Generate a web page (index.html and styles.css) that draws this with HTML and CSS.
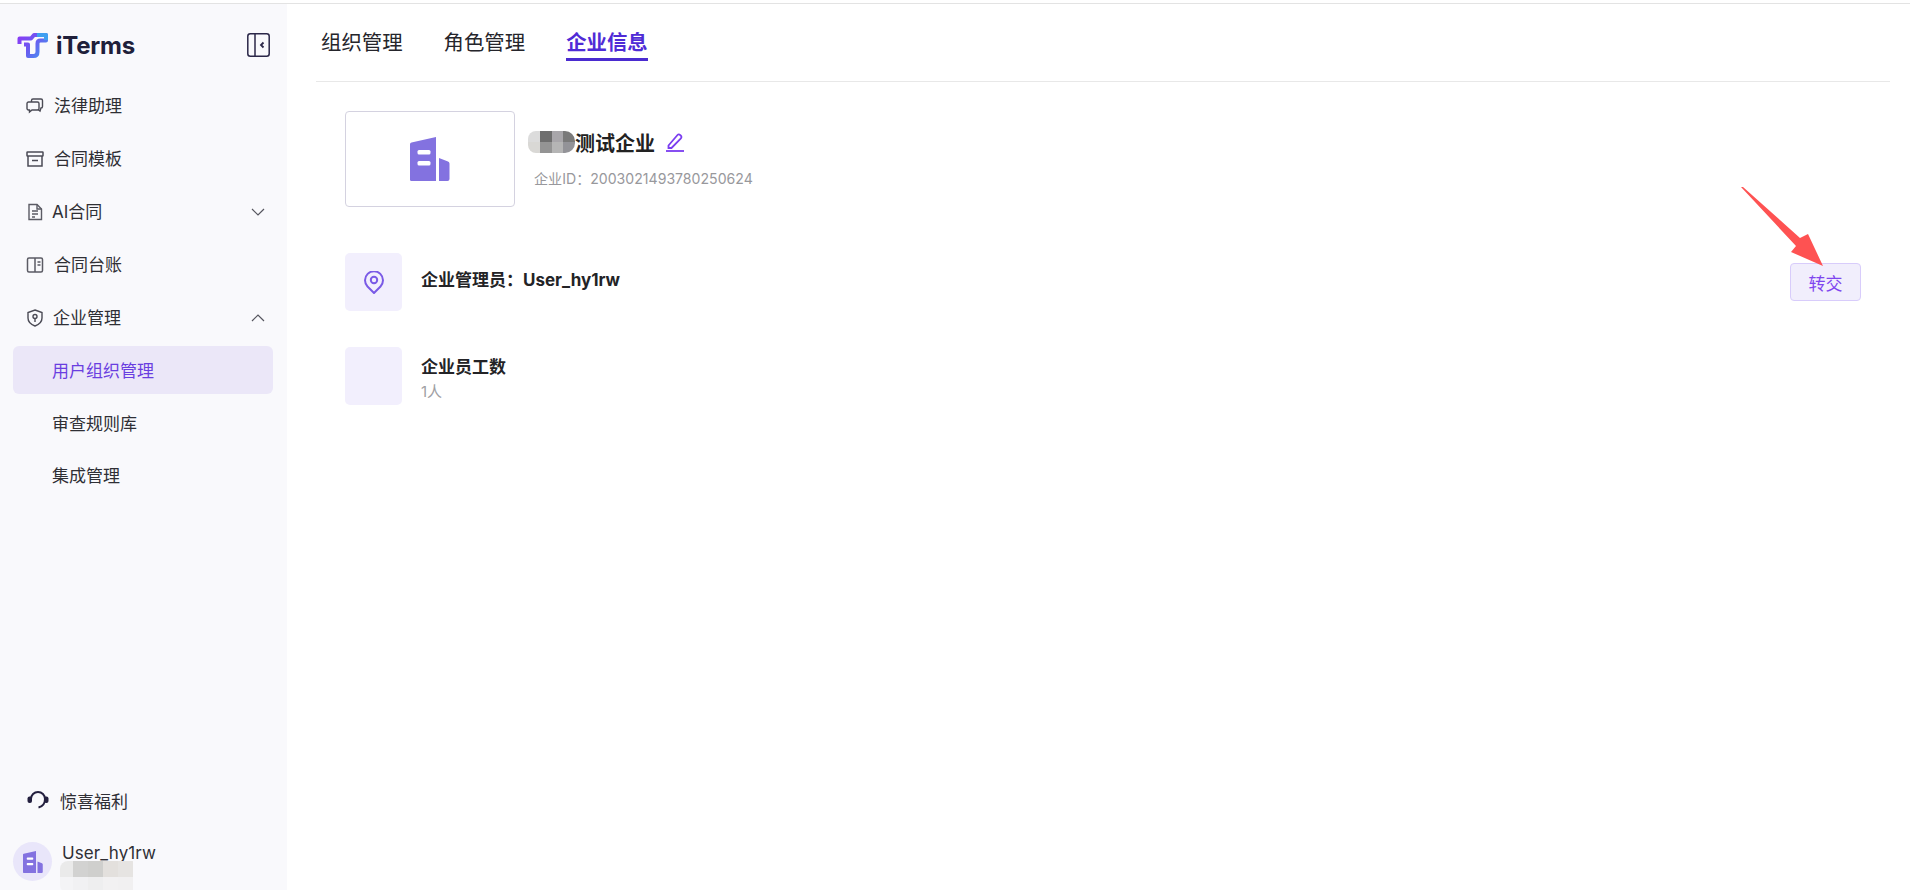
FILE: index.html
```html
<!DOCTYPE html>
<html lang="zh-CN">
<head>
<meta charset="utf-8">
<title>iTerms</title>
<link rel="stylesheet" href="styles.css">
</head>
<body>
<div class="topline"></div>
<div class="app">
  <aside class="sidebar">
    <div class="brand">
      <svg class="logo" width="32" height="27" viewBox="0 0 32 27" fill="none">
        <defs>
          <linearGradient id="lg" gradientUnits="userSpaceOnUse" x1="2" y1="4" x2="26" y2="24">
            <stop offset="0" stop-color="#8a3cf5"/><stop offset=".5" stop-color="#6a5af0"/><stop offset="1" stop-color="#4a90f0"/>
          </linearGradient>
        </defs>
        <path d="M2.500 12V6.500H14L17 3H29V8.500H23.500Q20.500 8.500 20.500 11.500V20Q20.500 24 16.500 24H11V12.500H7" stroke="url(#lg)" stroke-width="4" stroke-linejoin="round"/>
        <path d="M20 3h9V8" stroke="#3f9ff0" stroke-width="4" stroke-linejoin="round"/>
      </svg>
      <span class="brand-name">iTerms</span>
      <svg class="collapse" width="23" height="24" viewBox="0 0 23 24" fill="none" stroke="#2b2748" stroke-width="1.500">
        <rect x=".8" y=".8" width="21.400" height="22.400" rx="2.500"/>
        <path d="M8 1v22"/>
        <path d="M16.500 9.500 14 12l2.500 2.500" stroke-width="1.800"/>
      </svg>
    </div>
    <nav class="menu">
      <a class="item">
        <svg class="ico" viewBox="0 0 18 18" fill="none" stroke="#4b4b55" stroke-width="1.400"><path d="M5.500 5V3.500a1.500 1.500 0 0 1 1.500-1.500h8a1.500 1.500 0 0 1 1.500 1.500v6A1.500 1.500 0 0 1 15 11l-1 3-2-1.500"/><path d="M2.500 5h9A1.500 1.500 0 0 1 13 6.500v5A1.500 1.500 0 0 1 11.500 13H6l-2.500 2v-2h-1A1.500 1.500 0 0 1 1 11.500v-5A1.500 1.500 0 0 1 2.500 5z"/></svg>
        <span>法律助理</span>
      </a>
      <a class="item">
        <svg class="ico" viewBox="0 0 18 18" fill="none" stroke="#4b4b55" stroke-width="1.500"><rect x="1" y="2" width="16" height="4" rx=".5"/><path d="M2 6v10h14V6M6 10.500h6"/></svg>
        <span>合同模板</span>
      </a>
      <a class="item">
        <svg class="ico ico-doc" viewBox="0 0 18 18" fill="none" stroke="#5b5b64" stroke-width="1.400"><path d="M3 1.500h8l4.500 4.500v10.500H3z"/><path d="M11 1.500V6h4.500M6 8h6M6 11h6M6 14h3"/></svg>
        <span>AI合同</span>
        <svg class="chev" viewBox="0 0 14 8" fill="none" stroke="#55555e" stroke-width="1.200"><path d="m1 1 6 6 6-6"/></svg>
      </a>
      <a class="item">
        <svg class="ico" viewBox="0 0 18 18" fill="none" stroke="#5b5b64" stroke-width="1.500"><rect x="1.500" y="2" width="15" height="14" rx="1.500"/><path d="M9 2v14M11.500 6h3M11.500 9h3"/></svg>
        <span>合同台账</span>
      </a>
      <a class="item item-open">
        <svg class="ico ico-shield" viewBox="0 0 18 18" fill="none" stroke="#4b4b55" stroke-width="1.400"><path d="M9 1 16 3.500V9c0 4-3 6.500-7 8-4-1.500-7-4-7-8V3.500z"/><circle cx="9" cy="7.500" r="2"/><path d="M9 9.500V13"/></svg>
        <span>企业管理</span>
        <svg class="chev" viewBox="0 0 14 8" fill="none" stroke="#55555e" stroke-width="1.200"><path d="m1 7 6-6 6 6"/></svg>
      </a>
      <a class="sub active">用户组织管理</a>
      <a class="sub">审查规则库</a>
      <a class="sub">集成管理</a>
    </nav>
    <div class="foot">
      <a class="perk">
        <svg class="headset" viewBox="0 0 22 20" fill="none" stroke="#24203f" stroke-width="2"><path d="M4 9a7 7 0 0 1 14 0c0 4.500-2.500 7.500-6.500 8.500"/><rect x=".5" y="6.500" width="4.500" height="6.500" rx="2" fill="#24203f" stroke="none"/><rect x="17" y="6.500" width="4.500" height="6.500" rx="2" fill="#24203f" stroke="none"/></svg>
        <span>惊喜福利</span>
      </a>
      <div class="user">
        <div class="avatar">
          <svg width="20" height="22" viewBox="0 0 40 44"><use href="#bld"/></svg>
        </div>
        <div class="user-text">
          <div class="user-name">User_hy1rw</div>
          <div class="smear"><i></i><i></i><i></i><i></i><i></i><i></i><i></i><i></i><i></i><i></i></div>
        </div>
      </div>
    </div>
  </aside>
  <main class="main">
    <div class="tabs">
      <a class="tab">组织管理</a>
      <a class="tab">角色管理</a>
      <a class="tab on">企业信息</a>
    </div>
    <section class="company">
      <div class="co-logo">
        <svg width="40" height="44" viewBox="0 0 40 44">
          <symbol id="bld" viewBox="0 0 40 44">
            <path fill="#8372e0" d="M1.500 5.500 26 0v44H3a2 2 0 0 1-3-2V7a2 2 0 0 1 1.500-1.500zM29 21l9 3.500a2.500 2.500 0 0 1 1.500 2V42a2 2 0 0 1-2 2H29z"/>
            <rect x="7.500" y="13" width="13" height="4.500" rx="1.500" fill="#fff"/>
            <rect x="7.500" y="24" width="13" height="4.500" rx="1.500" fill="#fff"/>
          </symbol>
          <use href="#bld"/>
        </svg>
      </div>
      <div class="co-info">
        <div class="co-name">
          <span class="mosaic"><i></i><i></i><i></i><i></i><i></i><i></i><i></i><i></i></span>
          <span>测试企业</span>
          <svg class="pen" width="20" height="20" viewBox="0 0 20 20" fill="none" stroke="#7a3cf0" stroke-width="1.800"><path d="M3.500 13.500 12.500 3a1.800 1.800 0 0 1 2.600 0l.8.7a1.800 1.800 0 0 1 0 2.600L6.500 16H3.500z"/><path d="M1 19h18"/></svg>
        </div>
        <div class="co-id">企业ID：2003021493780250624</div>
      </div>
    </section>
    <section class="row row-admin">
      <div class="badge">
        <svg width="20" height="23" viewBox="0 0 20 23" fill="none" stroke="#7a5ae6" stroke-width="2"><path d="M10 22 3.500 15.500A9 9 0 1 1 16.500 15.500z" stroke-linejoin="round"/><circle cx="10" cy="9" r="3.200"/></svg>
      </div>
      <div class="row-title">企业管理员：User_hy1rw</div>
      <button class="transfer">转交</button>
    </section>
    <section class="row">
      <div class="badge"></div>
      <div class="row-text">
        <div class="row-title">企业员工数</div>
        <div class="row-sub">1人</div>
      </div>
    </section>
  </main>
</div>
<svg class="arrow" width="90" height="86" viewBox="0 0 90 86"><polygon fill="#fe5252" points="0,0 2,0 59,51 67,47 82,79 50,65 55,59"/></svg>
</body>
</html>
```
FILE: styles.css
```css
* { box-sizing: border-box; }
html, body { margin: 0; height: 890px; overflow: hidden; background: #fff; }
body { font-family: Inter, "Noto Sans CJK SC", "Liberation Sans", sans-serif; color: #2a2a2e; position: relative; }
a { display: block; }
i { display: block; }
.topline { height: 4px; background: linear-gradient(#fff 3px, #e3e3e3 3px); }
.app { display: flex; height: 886px; overflow: hidden; }
.sidebar { width: 287px; flex: none; background: #f9f9fc; display: flex; flex-direction: column; padding: 0 14px 0 13px; }
.brand { display: flex; align-items: center; height: 70px; padding: 12px 5px 0 5px; }
.logo { flex: none; margin-left: -1px; margin-right: 1px; }
.brand-name { font-size: 24px; font-weight: 700; color: #20203a; margin-left: 6px; letter-spacing: -.2px; }
.collapse { margin-left: auto; margin-right: -2px; flex: none; }
.menu { margin-top: 8px; }
.item { display: flex; align-items: center; height: 48px; margin-bottom: 5px; padding-left: 13px; font-size: 17px; line-height: 24px; color: #2f2f35; }
.item-open { margin-bottom: 4px; }
.ico { width: 18px; height: 18px; flex: none; margin-right: 10px; }
.ico-doc { margin-right: 8px; }
.ico-shield { margin-right: 9px; }
.chev { width: 14px; height: 8px; margin-left: auto; margin-right: 8px; }
.sub { height: 48px; line-height: 50px; margin-bottom: 4.500px; padding-left: 39px; font-size: 17px; color: #2f2f35; border-radius: 6px; }
.sub.active { background: #ebe7f8; color: #6a3ee0; }
.foot { margin-top: auto; }
.perk { display: flex; align-items: center; font-size: 17px; color: #2f2f35; padding-left: 14px; height: 24px; margin-bottom: 30px; }
.headset { width: 22px; height: 20px; margin-right: 11px; flex: none; }
.user { display: flex; height: 48px; }
.avatar { width: 39px; height: 39px; border-radius: 50%; background: #e9e6fa; display: flex; align-items: center; justify-content: center; flex: none; }
.user-text { margin-left: 10px; }
.user-name { font-size: 17px; line-height: 24px; color: #2f2f35; letter-spacing: .1px; margin-top: -1px; }
.smear { display: grid; grid-template-columns: 13px 15px 15px 15px 15px; grid-template-rows: 16px 16px; width: 80px; margin-left: -2px; margin-top: -4px; border-radius: 8px; overflow: hidden; position: relative; }
.smear i:nth-child(1) { background: #eaeaea; }
.smear i:nth-child(2) { background: #d2d2d1; }
.smear i:nth-child(3) { background: #cfcfcd; }
.smear i:nth-child(4) { background: #e3e0dd; }
.smear i:nth-child(5) { background: #e6e4e2; }
.smear i:nth-child(6) { background: #f4f4f6; }
.smear i:nth-child(7) { background: #f1f1f3; }
.smear i:nth-child(8) { background: #eeeeef; }
.smear i:nth-child(9) { background: #f2f1f2; }
.smear i:nth-child(10) { background: #f1f0f1; }
.main { flex: 1; min-width: 0; padding: 0 20px 0 29px; }
.tabs { display: flex; gap: 41px; height: 78px; border-bottom: 1px solid #e8e8e8; padding-left: 5px; padding-top: 23px; }
.tab { font-size: 20.400px; line-height: 32px; height: 34px; color: #25252b; }
.tab.on { color: #4f2bd6; font-weight: 700; border-bottom: 3px solid #4a2bd0; }
.company { display: flex; margin: 29px 0 0 29px; }
.co-logo { width: 170px; height: 96px; border: 1px solid #d4d2e0; border-radius: 4px; display: flex; align-items: center; justify-content: center; flex: none; }
.co-info { margin-left: 13px; padding-top: 19px; }
.co-name { display: flex; align-items: center; height: 24px; font-size: 20px; font-weight: 700; color: #222; }
.mosaic { display: grid; grid-template-columns: repeat(4, 11.750px); grid-template-rows: repeat(2, 11px); border-radius: 8px 10px 10px 8px; overflow: hidden; width: 47px; flex: none; }
.mosaic i:nth-child(1) { background: #dcdcdc; }
.mosaic i:nth-child(2) { background: #6e6e6e; }
.mosaic i:nth-child(3) { background: #a8a6aa; }
.mosaic i:nth-child(4) { background: #7a7a7a; }
.mosaic i:nth-child(5) { background: #d9d8d5; }
.mosaic i:nth-child(6) { background: #949494; }
.mosaic i:nth-child(7) { background: #b5b5b5; }
.mosaic i:nth-child(8) { background: #939398; }
.pen { margin-left: 10px; flex: none; }
.co-id { margin: 15px 0 0 6px; font-size: 14.100px; line-height: 20px; color: #98989c; }
.row { display: flex; align-items: flex-start; margin: 36px 29px 0 29px; }
.row-admin { margin-top: 46px; position: relative; }
.badge { width: 57px; height: 58px; border-radius: 5px; background: #f2effd; display: flex; align-items: center; justify-content: center; flex: none; margin-right: 19px; }
.row-admin .row-title { margin-top: 15px; }
.row-title { font-size: 17px; font-weight: 700; line-height: 24px; color: #232326; }
.row-text { padding-top: 8px; }
.row-sub { font-size: 15px; line-height: 20px; color: #a0a0a4; margin-top: 3px; }
.transfer { margin-left: auto; margin-top: 10px; width: 71px; height: 38px; background: #f1eefc; border: 1px solid #d8ccfb; border-radius: 4px; color: #7f45ef; font: 17px Inter, "Noto Sans CJK SC", sans-serif; padding: 0; }
.arrow { position: absolute; left: 1741px; top: 187px; }
```
